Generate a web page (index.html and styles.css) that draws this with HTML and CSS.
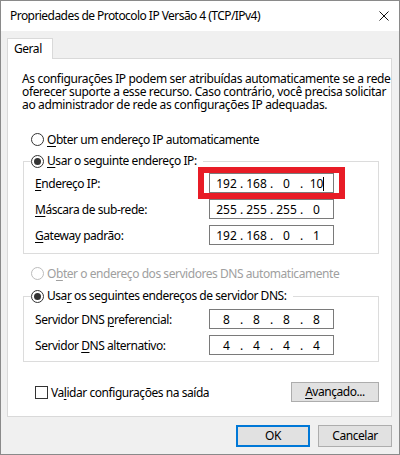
FILE: index.html
```html
<!DOCTYPE html>
<html lang="pt">
<head>
<meta charset="utf-8">
<title>Propriedades de Protocolo IP Versão 4 (TCP/IPv4)</title>
<link rel="stylesheet" href="styles.css">
</head>
<body>
<div class="window">
  <div class="titlebar">
    <span class="title">Propriedades de Protocolo IP Versão 4 (TCP/IPv4)</span>
    <svg class="close" width="10" height="10" viewBox="0 0 10 10"><path d="M0.5 0.5L9.5 9.5M9.5 0.5L0.5 9.5" stroke="#111" stroke-width="1" fill="none"/></svg>
  </div>
  <div class="content">
    <div class="tabs"><div class="tab">Geral</div></div>
    <div class="panel">
      <p class="intro">As configurações IP podem ser atribuídas automaticamente se a rede<br>oferecer suporte a esse recurso. Caso contrário, você precisa solicitar<br>ao administrador de rede as configurações IP adequadas.</p>

      <div class="radio-row first"><span class="radio"></span><span><u>O</u>bter um endereço IP automaticamente</span></div>

      <fieldset class="group ip-group">
        <legend><span class="radio checked"></span><span><u>U</u>sar o seguinte endereço IP:</span></legend>
        <div class="grid">
          <span class="label"><u>E</u>ndereço IP:</span>
          <div class="ipfield highlight"><span class="oct">192</span><span class="dot">.</span><span class="oct">168</span><span class="dot">.</span><span class="oct">0</span><span class="dot">.</span><span class="oct">10<span class="caret"></span></span></div>
          <span class="label"><u>M</u>áscara de sub-rede:</span>
          <div class="ipfield"><span class="oct">255</span><span class="dot">.</span><span class="oct">255</span><span class="dot">.</span><span class="oct">255</span><span class="dot">.</span><span class="oct">0</span></div>
          <span class="label"><u>G</u>ateway padrão:</span>
          <div class="ipfield"><span class="oct">192</span><span class="dot">.</span><span class="oct">168</span><span class="dot">.</span><span class="oct">0</span><span class="dot">.</span><span class="oct">1</span></div>
        </div>
      </fieldset>

      <div class="radio-row disabled"><span class="radio"></span><span>O<u>b</u>ter o endereço dos servidores DNS automaticamente</span></div>

      <fieldset class="group dns-group">
        <legend><span class="radio checked"></span><span>Usa<u>r</u> os seguintes endereços de servidor DNS:</span></legend>
        <div class="grid">
          <span class="label">Servidor DNS <u>p</u>referencial:</span>
          <div class="ipfield"><span class="oct">8</span><span class="dot">.</span><span class="oct">8</span><span class="dot">.</span><span class="oct">8</span><span class="dot">.</span><span class="oct">8</span></div>
          <span class="label">Servidor <u>D</u>NS alternativo:</span>
          <div class="ipfield"><span class="oct">4</span><span class="dot">.</span><span class="oct">4</span><span class="dot">.</span><span class="oct">4</span><span class="dot">.</span><span class="oct">4</span></div>
        </div>
      </fieldset>

      <div class="bottom-row">
        <div class="check-row"><span class="checkbox"></span><span>Va<u>l</u>idar configurações na saída</span></div>
        <button class="btn advanced"><u>A</u>vançado...</button>
      </div>
    </div>
    <div class="buttons">
      <button class="btn default">OK</button>
      <button class="btn">Cancelar</button>
    </div>
  </div>
</div>
</body>
</html>
```
FILE: styles.css
```css
* { box-sizing: border-box; }
html, body { margin: 0; padding: 0; }
body {
  width: 400px;
  height: 455px;
  font-family: "Noto Sans", "DejaVu Sans", sans-serif;
  font-size: 12px;
  letter-spacing: -0.45px;
  color: #000;
  background: #fff;
}
u { text-decoration: underline; text-underline-offset: 2px; }

.window {
  width: 400px;
  height: 455px;
  border: 1px solid #8a8a8a;
  display: flex;
  flex-direction: column;
  background: #f0f0f0;
}
.titlebar {
  height: 30px;
  flex: none;
  background: #fff;
  display: flex;
  align-items: center;
  justify-content: space-between;
  padding: 0 10px 0 9px;
}
.title { font-size: 12px; line-height: 16px; letter-spacing: -0.55px; }
.close { display: block; }

.content {
  flex: 1;
  padding: 7px 7px 7px 6px;
  display: flex;
  flex-direction: column;
}
.tabs { display: flex; }
.tab {
  width: 46px;
  height: 21px;
  margin-bottom: -1px;
  position: relative;
  z-index: 1;
  background: #fff;
  border: 1px solid #d9d9d9;
  border-bottom: none;
  padding-left: 6px;
  line-height: 19px;
}
.panel {
  height: 359px;
  flex: none;
  background: #fff;
  border: 1px solid #d9d9d9;
  display: flex;
  flex-direction: column;
}
.intro {
  margin: 13px 0 0 14px;
  line-height: 13px;
  white-space: nowrap;
  letter-spacing: -0.35px;
}

.radio-row {
  display: flex;
  align-items: center;
  height: 16px;
  margin-left: 23px;
  white-space: nowrap;
}
.radio-row.first { margin-top: 20px; }
.radio-row.disabled { margin-top: 11px; color: #a0a0a0; }

.radio {
  width: 13px;
  height: 13px;
  border: 1px solid #333;
  border-radius: 50%;
  background: #fff;
  margin-right: 3px;
  position: relative;
  flex: none;
}
.radio.checked::after {
  content: "";
  position: absolute;
  left: 2px; top: 2px;
  width: 7px; height: 7px;
  border-radius: 50%;
  background: #333;
}
.disabled .radio { border-color: #bcbcbc; }

.group {
  margin: 6px 12px 0 15px;
  padding: 0 0 8px 11px;
  border: 1px solid #dcdcdc;
  min-width: 0;
}
.group legend {
  display: flex;
  align-items: center;
  height: 16px;
  line-height: 16px;
  padding: 0 6px 0 0;
  margin-left: -4px;
  white-space: nowrap;
}
.dns-group { margin-top: 7px; padding-bottom: 6px; }

.grid {
  display: grid;
  grid-template-columns: 174px 125px;
  grid-auto-rows: 20px;
  row-gap: 6px;
  align-items: center;
  margin-top: 4px;
}
.dns-group .grid { margin-top: 5px; }
.label { white-space: nowrap; }

.ipfield {
  width: 125px;
  height: 20px;
  border: 1px solid #7a7a7a;
  display: flex;
  align-items: center;
  padding-left: 5px;
  background: #fff;
  position: relative;
  letter-spacing: 0;
}
.oct { width: 23px; text-align: center; white-space: nowrap; }
.dot { width: 7px; text-align: center; }
.caret {
  display: inline-block;
  width: 1px;
  height: 14px;
  background: #000;
  vertical-align: -3px;
  margin-right: -1px;
}
.highlight::after {
  content: "";
  position: absolute;
  left: -12px; right: -12px; top: -7px; bottom: -7px;
  border: 6px solid #e81c26;
  pointer-events: none;
}

.bottom-row {
  margin: 20px 12px 0 27px;
  display: flex;
  align-items: center;
  justify-content: space-between;
  height: 20px;
}
.check-row { display: flex; align-items: center; white-space: nowrap; }
.checkbox {
  width: 13px;
  height: 13px;
  border: 1px solid #333;
  background: #fff;
  margin-right: 3px;
}

.btn {
  font: inherit;
  letter-spacing: inherit;
  color: #000;
  background: #e1e1e1;
  border: 1px solid #adadad;
  padding: 0;
  line-height: 16px;
}
.advanced { width: 88px; height: 20px; }

.buttons {
  margin-top: 8px;
  display: flex;
  justify-content: flex-end;
  gap: 8px;
}
.buttons .btn { width: 74px; height: 22px; }
.btn.default { border: 2px solid #0078d7; }
```
